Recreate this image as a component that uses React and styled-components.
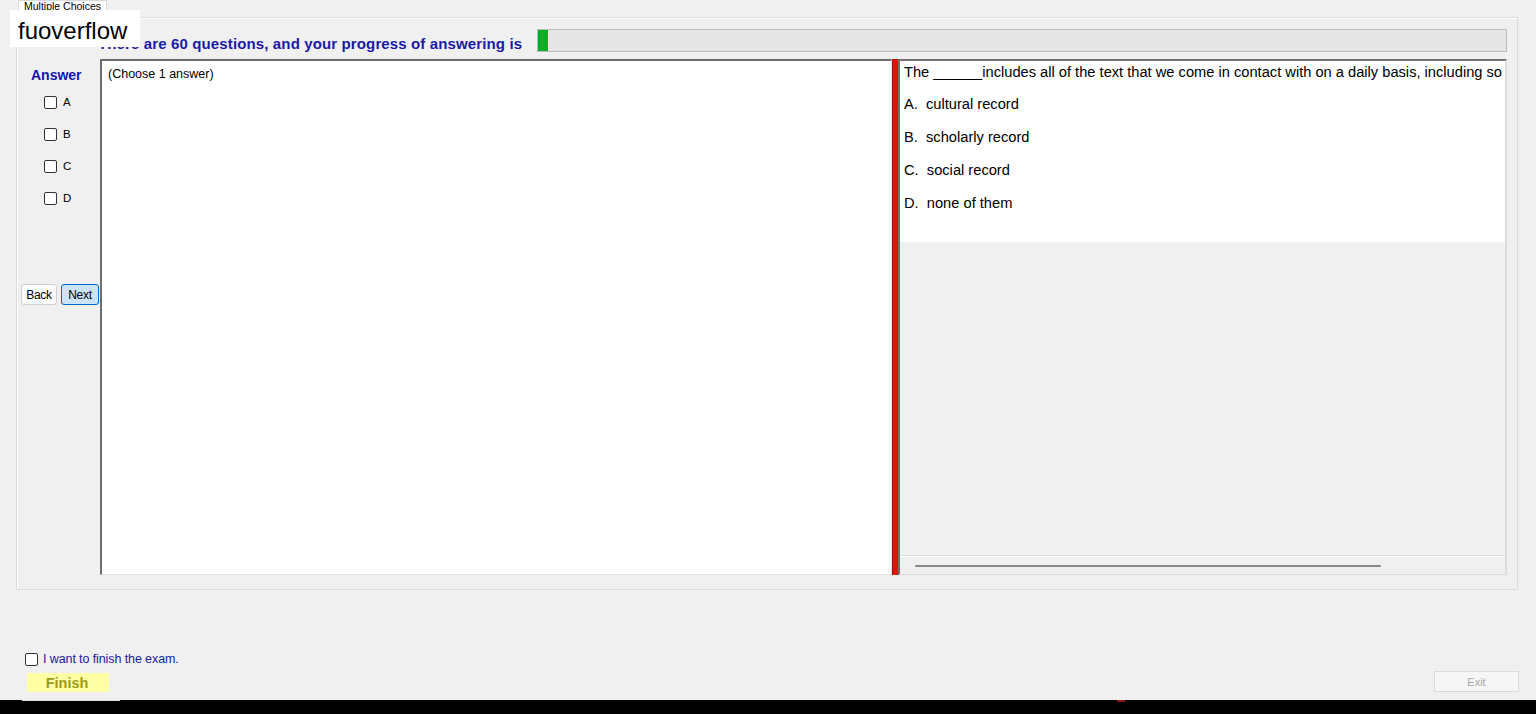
import React from 'react'
import styled, { createGlobalStyle } from 'styled-components'

const GlobalStyle = createGlobalStyle`
  html, body {
    margin: 0;
    padding: 0;
    background: #f0f0f0;
    font-family: 'Liberation Sans', Arial, sans-serif;
    overflow: hidden;
  }
`

const Page = styled.div`
  position: relative;
  width: 1536px;
  height: 714px;
  display: flex;
  flex-direction: column;
  background: #f0f0f0;
`

const Watermark = styled.div`
  position: absolute;
  top: 10px;
  left: 10px;
  width: 130px;
  height: 37px;
  box-sizing: border-box;
  padding: 7px 0 0 8px;
  background: #fff;
  color: #000;
  font-size: 24px;
  line-height: 28px;
  z-index: 5;
`

const TabStrip = styled.div`
  height: 17px;
  display: flex;
  padding-left: 18px;
`

const Tab = styled.div`
  height: 17px;
  box-sizing: border-box;
  padding: 0 5px;
  background: #fff;
  border: 1px solid #d9d9d9;
  border-bottom: none;
  font-size: 10.5px;
  line-height: 12px;
  color: #000;
  overflow: hidden;
  span {
    display: block;
    margin-top: -1px;
  }
`

const TabPanel = styled.div`
  margin-left: 16px;
  width: 1502px;
  height: 573px;
  box-sizing: border-box;
  border: 1px solid #dcdcdc;
  box-shadow: inset 1px 1px 0 #fff;
  display: flex;
  flex-direction: column;
`

const HeaderRow = styled.div`
  margin-top: 11px;
  height: 23px;
  display: flex;
  align-items: flex-end;
  padding-left: 81px;
  padding-right: 10px;
`

const HeaderText = styled.div`
  font-size: 15px;
  font-weight: bold;
  letter-spacing: 0.13px;
  line-height: 17px;
  color: #1a1aa8;
  white-space: nowrap;
  margin-right: 15px;
`

const ProgressTrack = styled.div`
  flex: 1;
  height: 23px;
  box-sizing: border-box;
  border: 1px solid #bcbcbc;
  background: #e6e6e6;
  display: flex;
`

const ProgressFill = styled.div`
  height: 100%;
  background: #06b025;
`

const BodyRow = styled.div`
  margin-top: 7px;
  height: 516px;
  display: flex;
`

const AnswerCol = styled.div`
  width: 83px;
  display: flex;
  flex-direction: column;
`

const AnswerTitle = styled.div`
  padding: 7px 0 0 14px;
  font-size: 14px;
  font-weight: bold;
  line-height: 18px;
  color: #1414b0;
`

const Options = styled.div`
  margin-top: 2px;
  display: flex;
  flex-direction: column;
`

const OptionRow = styled.label`
  height: 32px;
  display: flex;
  align-items: center;
  padding-left: 27px;
  gap: 6px;
  font-size: 11.5px;
  color: #000;
`

const Box = styled.span`
  width: 13px;
  height: 13px;
  box-sizing: border-box;
  border: 1px solid #333;
  border-radius: 2px;
  background: #fff;
  flex-shrink: 0;
`

const NavRow = styled.div`
  margin-top: 70px;
  padding-left: 4px;
  display: flex;
  gap: 4px;
`

const NavButton = styled.button`
  width: ${p => p.$w}px;
  height: 21px;
  padding: 0;
  box-sizing: border-box;
  border: 1px solid ${p => (p.$active ? '#0067c0' : '#d0d0d0')};
  border-radius: 3px;
  background: ${p => (p.$active ? '#cce4f7' : '#fdfdfd')};
  font-family: 'Liberation Sans', Arial, sans-serif;
  font-size: 12px;
  letter-spacing: -0.3px;
  color: #000;
`

const MainBox = styled.div`
  width: 792px;
  box-sizing: border-box;
  background: #fff;
  border-top: 2px solid #6d6d6d;
  border-left: 2px solid #6d6d6d;
  border-right: 1px solid #e3e3e3;
  border-bottom: 1px solid #e3e3e3;
  padding: 6px 6px;
  font-size: 12.5px;
  line-height: 15px;
  color: #000;
`

const Splitter = styled.div`
  width: 6px;
  box-sizing: border-box;
  background: #e2130b;
  border-left: 1px solid #a01010;
`

const RightPanel = styled.div`
  width: 609px;
  box-sizing: border-box;
  border-top: 2px solid #707070;
  border-left: 2px solid #707070;
  border-right: 2px solid #dcdcdc;
  border-bottom: 1px solid #dcdcdc;
  background: #f0f0f0;
  display: flex;
  flex-direction: column;
  overflow: hidden;
`

const QuestionArea = styled.div`
  height: 181px;
  box-sizing: border-box;
  background: #fff;
  padding: 1px 0 0 4px;
  font-size: 14.67px;
  color: #000;
  white-space: pre;
  overflow: hidden;
`

const QuestionLine = styled.div`
  line-height: 20px;
  margin-bottom: 6px;
`

const Choice = styled.div`
  line-height: 33px;
`

const Fill = styled.div`
  flex: 1;
`

const HScroll = styled.div`
  height: 17px;
  border-top: 1px solid #fff;
  box-shadow: 0 -1px 0 #dedede;
  display: flex;
  align-items: center;
  padding-left: 15px;
`

const Thumb = styled.div`
  width: 466px;
  height: 2px;
  border-radius: 1px;
  background: #888;
`

const Footer = styled.div`
  flex: 1;
  display: flex;
  justify-content: space-between;
  align-items: flex-end;
  padding: 0 17px 8px 25px;
`

const FinishCol = styled.div`
  display: flex;
  flex-direction: column;
`

const ConfirmRow = styled.label`
  height: 16px;
  display: flex;
  align-items: center;
  gap: 5px;
  font-size: 12.5px;
  letter-spacing: -0.1px;
  color: #2020a0;
`

const FinishButton = styled.button`
  margin: 6px 0 0 2px;
  width: 82px;
  height: 19px;
  padding: 0 2px 0 0;
  border: none;
  background: #ffffa6;
  font-family: 'Liberation Sans', Arial, sans-serif;
  font-size: 14.5px;
  font-weight: bold;
  color: #9c9c18;
`

const ExitButton = styled.button`
  width: 85px;
  height: 21px;
  padding: 0;
  box-sizing: border-box;
  border: 1px solid #dadada;
  background: #f6f6f6;
  font-family: 'Liberation Sans', Arial, sans-serif;
  font-size: 11px;
  color: #a8a8a8;
`

const BlackBar = styled.div`
  height: 14px;
  background: #000;
  display: flex;
  align-items: flex-start;
`

const BarLine = styled.div`
  margin-left: ${p => p.$x}px;
  width: ${p => p.$w}px;
  height: ${p => p.$h}px;
  background: ${p => p.$c};
`

const choices = [
  ['A.', 'cultural record'],
  ['B.', 'scholarly record'],
  ['C.', 'social record'],
  ['D.', 'none of them'],
]

export default function App() {
  const answered = 1
  const total = 60
  return (
    <>
      <GlobalStyle />
      <Page>
        <Watermark>fuoverflow</Watermark>
        <TabStrip>
          <Tab><span>Multiple Choices</span></Tab>
        </TabStrip>
        <TabPanel>
          <HeaderRow>
            <HeaderText>There are {total} questions, and your progress of answering is</HeaderText>
            <ProgressTrack>
              <ProgressFill style={{ width: `${Math.max(10, (answered / total) * 10)}px` }} />
            </ProgressTrack>
          </HeaderRow>
          <BodyRow>
            <AnswerCol>
              <AnswerTitle>Answer</AnswerTitle>
              <Options>
                {['A', 'B', 'C', 'D'].map(l => (
                  <OptionRow key={l}>
                    <Box />
                    {l}
                  </OptionRow>
                ))}
              </Options>
              <NavRow>
                <NavButton $w={36}>Back</NavButton>
                <NavButton $w={38} $active>Next</NavButton>
              </NavRow>
            </AnswerCol>
            <MainBox>(Choose 1 answer)</MainBox>
            <Splitter />
            <RightPanel>
              <QuestionArea>
                <QuestionLine>The ______includes all of the text that we come in contact with on a daily basis, including so</QuestionLine>
                {choices.map(([k, v]) => (
                  <Choice key={k}>{k}  {v}</Choice>
                ))}
              </QuestionArea>
              <Fill />
              <HScroll>
                <Thumb />
              </HScroll>
            </RightPanel>
          </BodyRow>
        </TabPanel>
        <Footer>
          <FinishCol>
            <ConfirmRow>
              <Box />
              I want to finish the exam.
            </ConfirmRow>
            <FinishButton>Finish</FinishButton>
          </FinishCol>
          <ExitButton disabled>Exit</ExitButton>
        </Footer>
        <BlackBar>
          <BarLine $x={22} $w={98} $h={1} $c="#d8d8d8" />
          <BarLine $x={997} $w={8} $h={2} $c="#8a1a1a" />
        </BlackBar>
      </Page>
    </>
  )
}
